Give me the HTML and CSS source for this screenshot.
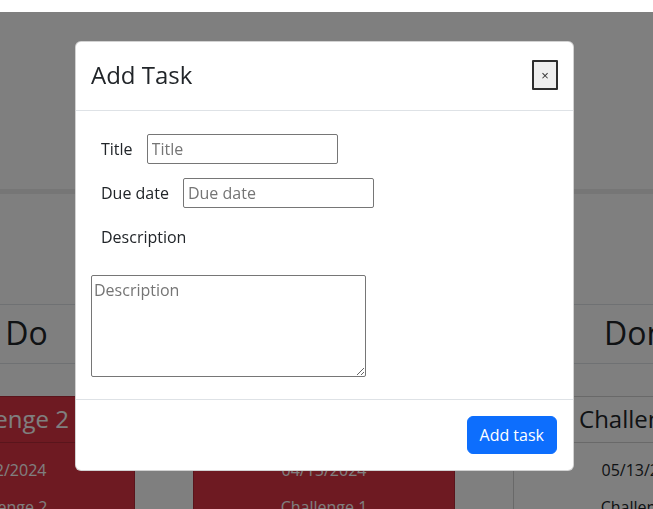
FILE: index.html
```html
<!DOCTYPE html>
<html lang="en">
<head>
<meta charset="utf-8">
<title>Kanban – Add Task</title>
<link rel="stylesheet" href="styles.css">
</head>
<body>
  <div class="page">
    <div class="hero"></div>
    <div class="rule"></div>
    <div class="board">
      <section class="column">
        <h2 class="col-title">To Do</h2>
        <div class="task task-danger">
          <h4 class="task-head">Challenge 2</h4>
          <div class="task-body">
            <p>04/12/2024</p>
            <p>Challenge 2</p>
          </div>
        </div>
      </section>
      <section class="column">
        <h2 class="col-title">In Progress</h2>
        <div class="task task-danger">
          <h4 class="task-head">Challenge 1</h4>
          <div class="task-body">
            <p>04/15/2024</p>
            <p>Challenge 1</p>
          </div>
        </div>
      </section>
      <section class="column">
        <h2 class="col-title">Done</h2>
        <div class="task task-light">
          <h4 class="task-head">Challenge 3</h4>
          <div class="task-body">
            <p>05/13/2024</p>
            <p>Challenge 3</p>
          </div>
        </div>
      </section>
    </div>
  </div>

  <div class="backdrop"></div>

  <div class="modal">
    <div class="modal-header">
      <h4 class="modal-title">Add Task</h4>
      <button class="close-btn" type="button">×</button>
    </div>
    <div class="modal-body">
      <div class="field">
        <label for="title">Title</label>
        <input id="title" type="text" placeholder="Title">
      </div>
      <div class="field">
        <label for="due">Due date</label>
        <input id="due" type="text" placeholder="Due date">
      </div>
      <div class="field">
        <label for="desc">Description</label>
      </div>
      <textarea id="desc" class="desc" placeholder="Description"></textarea>
    </div>
    <div class="modal-footer">
      <button class="btn-primary" type="button">Add task</button>
    </div>
  </div>
</body>
</html>
```

FILE: styles.css
```css
html, body {
  margin: 0;
  padding: 0;
  overflow: hidden;
  height: 100%;
}

body {
  font-family: "Open Sans", "Noto Sans", sans-serif;
  font-size: 16px;
  line-height: 1.5;
  color: #212529;
  background: #ffffff;
}

.page {
  width: 653px;
}

.hero {
  height: 189px;
}

.rule {
  height: 5px;
  background: #ececec;
}

.board {
  margin-right: 5px;
  margin-top: 110px;
  display: flex;
  justify-content: center;
  gap: 58px;
}

.column {
  flex: none;
  width: 262px;
}

.col-title {
  margin: 0 0 32px;
  padding: 9px 0 11px;
  font-size: 32px;
  font-weight: 400;
  line-height: 1.2;
  text-align: center;
  white-space: nowrap;
  border-top: 1px solid #dee2e6;
  border-bottom: 1px solid #dee2e6;
}

.task {
  border: 1px solid rgba(0, 0, 0, 0.175);
  text-align: center;
}

.task-danger {
  background: #dc3545;
  color: #ffffff;
}

.task-light {
  background: #ffffff;
  color: #212529;
}

.task-head {
  margin: 0;
  padding: 8px 16px;
  font-size: 24px;
  font-weight: 400;
  line-height: 1.2;
  white-space: nowrap;
  border-bottom: 1px solid rgba(0, 0, 0, 0.175);
}

.task-body {
  padding: 15px 16px 16px;
}

.task-body p {
  margin: 0 0 13px;
}

.backdrop {
  position: fixed;
  top: 12px;
  left: 0;
  right: 0;
  bottom: 0;
  background: rgba(0, 0, 0, 0.5);
}

.modal {
  position: fixed;
  top: 41px;
  left: 75px;
  width: 499px;
  box-sizing: border-box;
  background: #ffffff;
  border: 1px solid rgba(0, 0, 0, 0.175);
  border-radius: 6px;
  overflow: hidden;
}

.modal-header {
  display: flex;
  align-items: center;
  justify-content: space-between;
  padding: 15px 15px 17px 15px;
  border-bottom: 1px solid #dee2e6;
}

.modal-title {
  margin: 0;
  font-size: 24px;
  font-weight: 400;
  line-height: 1.5;
  color: #212529;
}

.close-btn {
  width: 26px;
  height: 30px;
  box-sizing: border-box;
  padding: 0;
  border: 2px solid #2e2e2e;
  border-radius: 1px;
  background: #efefef;
  color: #333333;
  font-family: "Liberation Sans", Arial, sans-serif;
  font-size: 13px;
  line-height: 1;
}

.modal-body {
  padding: 16px 15px;
}

.field {
  display: flex;
  align-items: center;
  gap: 14px;
  height: 44px;
  padding-left: 10px;
}

.field label {
  font-size: 16px;
  color: #212529;
}

.field input {
  width: 191px;
  height: 30px;
  box-sizing: border-box;
  margin: 0;
  padding: 0 4px;
  border: 1px solid #767676;
  border-radius: 2px;
  font-family: "Open Sans", "Noto Sans", sans-serif;
  font-size: 16px;
  color: #212529;
  background: #ffffff;
}

.desc {
  display: block;
  width: 275px;
  height: 102px;
  box-sizing: border-box;
  margin: 16px 0 6px;
  padding: 2px;
  border: 1px solid #767676;
  border-radius: 2px;
  font-family: "Open Sans", "Noto Sans", sans-serif;
  font-size: 16px;
  line-height: 1.5;
  color: #212529;
  resize: both;
}

input::placeholder,
textarea::placeholder {
  color: #757575;
}

.modal-footer {
  display: flex;
  justify-content: flex-end;
  padding: 12px;
  border-top: 1px solid #dee2e6;
}

.btn-primary {
  margin: 4px;
  padding: 6px 12px;
  border: 1px solid #0d6efd;
  border-radius: 6px;
  background: #0d6efd;
  color: #ffffff;
  font-family: "Open Sans", "Noto Sans", sans-serif;
  font-size: 16px;
  line-height: 1.5;
}
```
